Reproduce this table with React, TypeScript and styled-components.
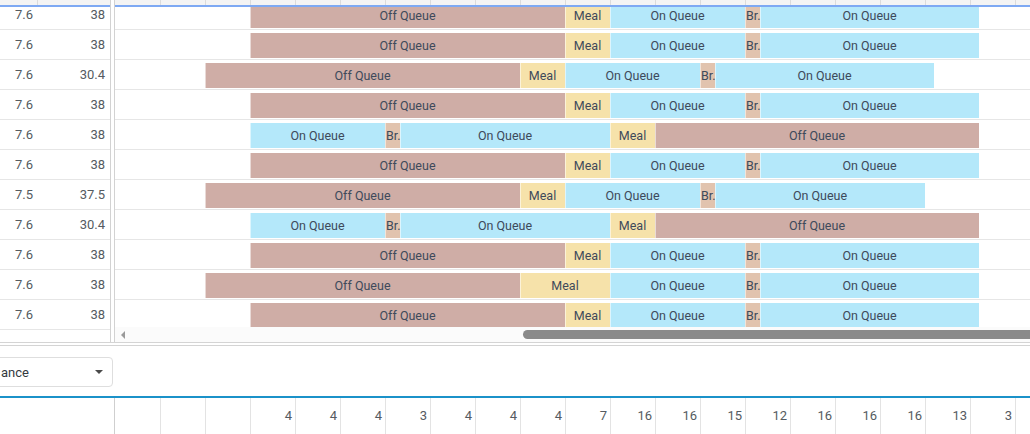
import React from "react";
import styled, { createGlobalStyle } from "styled-components";

const GlobalStyle = createGlobalStyle`
  html, body {
    margin: 0;
    padding: 0;
    background: #ffffff;
    overflow: hidden;
  }
  body {
    font-family: Roboto, "Liberation Sans", sans-serif;
  }
  * {
    box-sizing: border-box;
  }
`;

const CELL = 45;
const ORIGIN = 115;

type Kind = "off" | "meal" | "on" | "break";

const palette: Record<Kind, string> = {
  off: "#cfada6",
  meal: "#f6e2aa",
  on: "#b4e8fa",
  break: "#e1c3ae",
};

const labels: Record<Kind, string> = {
  off: "Off Queue",
  meal: "Meal",
  on: "On Queue",
  break: "Br…",
};

type Segment = [Kind, number];

type Agent = {
  day: string;
  week: string;
  start: number;
  segments: Segment[];
};

const morning: Segment[] = [
  ["off", 315],
  ["meal", 45],
  ["on", 135],
  ["break", 15],
  ["on", 219],
];

const evening: Segment[] = [
  ["on", 135],
  ["break", 15],
  ["on", 210],
  ["meal", 45],
  ["off", 324],
];

const agents: Agent[] = [
  { day: "7.6", week: "38", start: 250, segments: morning },
  { day: "7.6", week: "38", start: 250, segments: morning },
  { day: "7.6", week: "30.4", start: 205, segments: morning },
  { day: "7.6", week: "38", start: 250, segments: morning },
  { day: "7.6", week: "38", start: 250, segments: evening },
  { day: "7.6", week: "38", start: 250, segments: morning },
  {
    day: "7.5",
    week: "37.5",
    start: 205,
    segments: [
      ["off", 315],
      ["meal", 45],
      ["on", 135],
      ["break", 15],
      ["on", 210],
    ],
  },
  { day: "7.6", week: "30.4", start: 250, segments: evening },
  { day: "7.6", week: "38", start: 250, segments: morning },
  {
    day: "7.6",
    week: "38",
    start: 205,
    segments: [
      ["off", 315],
      ["meal", 90],
      ["on", 135],
      ["break", 15],
      ["on", 219],
    ],
  },
  { day: "7.6", week: "38", start: 250, segments: morning },
];

const totals = ["", "", "", "4", "4", "4", "3", "4", "4", "4", "7", "16", "16", "15", "12", "16", "16", "16", "13", "3", ""];

const Page = styled.div`
  width: 1030px;
  height: 434px;
  display: flex;
  flex-direction: column;
  overflow: hidden;
`;

const Schedule = styled.div`
  display: flex;
  height: 342px;
`;

const LeftPanel = styled.div`
  width: 111px;
  flex: none;
  display: flex;
  flex-direction: column;
  border-right: 1px solid #d2d2d2;
`;

const Gutter = styled.div`
  width: 3px;
  flex: none;
`;

const RightPanel = styled.div`
  flex: 1;
  min-width: 0;
  display: flex;
  flex-direction: column;
  border-left: 1px solid #d2d2d2;
  overflow: hidden;
`;

const HeaderStrip = styled.div<{ $offset?: number }>`
  height: 5px;
  flex: none;
  display: flex;
  padding-left: ${(p) => p.$offset ?? 0}px;
  background: #f4f4f4;
`;

const HeaderCell = styled.div<{ $width: number }>`
  width: ${(p) => p.$width}px;
  flex: none;
  border-right: 1px solid #dcdcdc;
`;

const AccentLine = styled.div`
  height: 2px;
  flex: none;
  background: #7ea9f3;
`;

const RowsViewport = styled.div<{ $height: number }>`
  height: ${(p) => p.$height}px;
  flex: none;
  overflow: hidden;
`;

const RowsScroll = styled.div`
  margin-top: -7px;
`;

const DataRow = styled.div`
  height: 30px;
  display: flex;
  border-bottom: 1px solid #e6e6e6;
`;

const NumberCell = styled.div<{ $width: number }>`
  width: ${(p) => p.$width}px;
  flex: none;
  display: flex;
  align-items: center;
  justify-content: flex-end;
  padding-right: 5px;
  font-size: 13px;
  color: #555b61;
`;

const TimelineRow = styled.div`
  height: 30px;
  display: flex;
  padding-top: 3px;
  border-bottom: 1px solid #e6e6e6;
`;

const Lead = styled.div<{ $width: number }>`
  width: ${(p) => p.$width}px;
  flex: none;
`;

const Activity = styled.div<{ $kind: Kind }>`
  height: 25px;
  flex: none;
  background: ${(p) => palette[p.$kind]};
  box-shadow: inset 1px 0 0 rgba(255, 255, 255, 0.55);
  color: #3e4a5b;
  font-size: 12.5px;
  line-height: 25px;
  text-align: center;
  white-space: nowrap;
  overflow: hidden;
  padding: 0 1px;
`;

const Scrollbar = styled.div`
  height: 15px;
  flex: none;
  display: flex;
  align-items: center;
  background: #fbfbfb;
`;

const ScrollArrow = styled.div`
  width: 0;
  height: 0;
  margin-left: 6px;
  border-top: 4px solid transparent;
  border-bottom: 4px solid transparent;
  border-right: 4px solid #9a9a9a;
`;

const ScrollThumb = styled.div`
  flex: 1;
  height: 9px;
  margin-left: 398px;
  background: #8a8a8a;
  border-radius: 5px 0 0 5px;
`;

const Splitter = styled.div`
  height: 4px;
  flex: none;
  border-top: 1px solid #d4d4d4;
  border-bottom: 1px solid #d4d4d4;
`;

const Toolbar = styled.div`
  height: 50px;
  flex: none;
  padding-top: 11px;
`;

const Select = styled.div`
  width: 153px;
  height: 30px;
  margin-left: -40px;
  display: flex;
  align-items: center;
  justify-content: space-between;
  padding: 0 9px 0 40px;
  border: 1px solid #dedede;
  border-radius: 4px;
  font-size: 13px;
  color: #333a40;
`;

const Caret = styled.span`
  width: 0;
  height: 0;
  border-left: 4px solid transparent;
  border-right: 4px solid transparent;
  border-top: 4px solid #4a4a4a;
`;

const TotalsLine = styled.div`
  height: 2px;
  flex: none;
  background: #1b92c9;
`;

const TotalsRow = styled.div`
  flex: 1;
  display: flex;
`;

const TotalsLabel = styled.div`
  width: 115px;
  flex: none;
  border-right: 1px solid #cfcfcf;
`;

const TotalsCells = styled.div`
  display: flex;
  padding-left: 1px;
`;

const TotalCell = styled.div`
  width: ${CELL}px;
  flex: none;
  display: flex;
  align-items: center;
  justify-content: flex-end;
  padding: 0 3px 2px 0;
  border-right: 1px solid #e3e3e3;
  font-size: 13px;
  color: #555b61;
`;

const headerColumns = Array.from({ length: 21 }, (_, i) => i);

export default function App() {
  return (
    <>
      <GlobalStyle />
      <Page>
        <Schedule>
          <LeftPanel>
            <HeaderStrip>
              <HeaderCell $width={38} />
            </HeaderStrip>
            <AccentLine />
            <RowsViewport $height={335}>
              <RowsScroll>
                {agents.map((a, i) => (
                  <DataRow key={i}>
                    <NumberCell $width={38}>{a.day}</NumberCell>
                    <NumberCell $width={72}>{a.week}</NumberCell>
                  </DataRow>
                ))}
              </RowsScroll>
            </RowsViewport>
          </LeftPanel>
          <Gutter />
          <RightPanel>
            <HeaderStrip $offset={1}>
              {headerColumns.map((c) => (
                <HeaderCell key={c} $width={CELL} />
              ))}
            </HeaderStrip>
            <AccentLine />
            <RowsViewport $height={320}>
              <RowsScroll>
                {agents.map((a, i) => (
                  <TimelineRow key={i}>
                    <Lead $width={a.start - ORIGIN} />
                    {a.segments.map(([kind, width], j) => (
                      <Activity key={j} $kind={kind} style={{ width }}>
                        {labels[kind]}
                      </Activity>
                    ))}
                  </TimelineRow>
                ))}
              </RowsScroll>
            </RowsViewport>
            <Scrollbar>
              <ScrollArrow />
              <ScrollThumb />
            </Scrollbar>
          </RightPanel>
        </Schedule>
        <Splitter />
        <Toolbar>
          <Select>
            <span>ance</span>
            <Caret />
          </Select>
        </Toolbar>
        <TotalsLine />
        <TotalsRow>
          <TotalsLabel />
          <TotalsCells>
            {totals.map((t, i) => (
              <TotalCell key={i}>{t}</TotalCell>
            ))}
          </TotalsCells>
        </TotalsRow>
      </Page>
    </>
  );
}
